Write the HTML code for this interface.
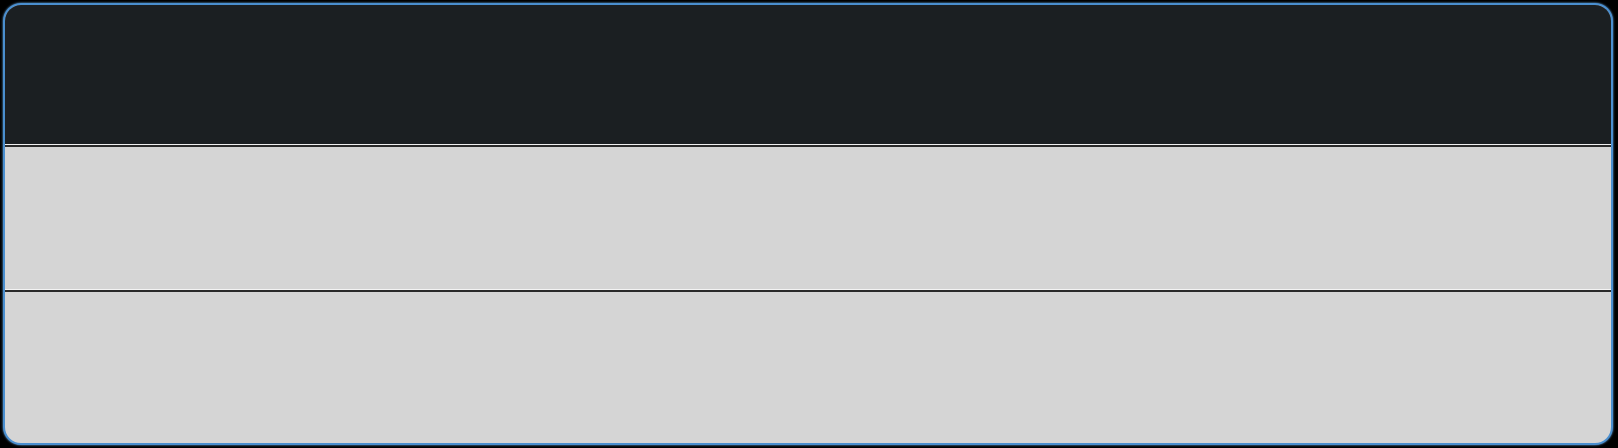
<!DOCTYPE html>
<html><head><style>
html,body{margin:0;padding:0;background:#000;width:1618px;height:448px;overflow:hidden}
.box{position:absolute;left:3px;top:3px;width:1606px;height:438px;border:2px solid #4a8fd0;border-radius:18px;overflow:hidden;background:#d5d5d5;box-shadow:0 0 2px #6aa8e0}
.hd{position:absolute;left:0;top:0;right:0;height:139px;background:#1b1f22}
.l1{position:absolute;left:0;right:0;top:139px;height:1px;background:#f0f0f0}
.d1{position:absolute;left:0;right:0;top:140px;height:2px;background:#2a2a2a}
.l2{position:absolute;left:0;right:0;top:284px;height:1px;background:#f4f4f4}
.d2{position:absolute;left:0;right:0;top:285px;height:2px;background:#2a2a2a}
</style></head><body>
<div class="box"><div class="hd"></div><div class="l1"></div><div class="d1"></div><div class="l2"></div><div class="d2"></div></div>
</body></html>
